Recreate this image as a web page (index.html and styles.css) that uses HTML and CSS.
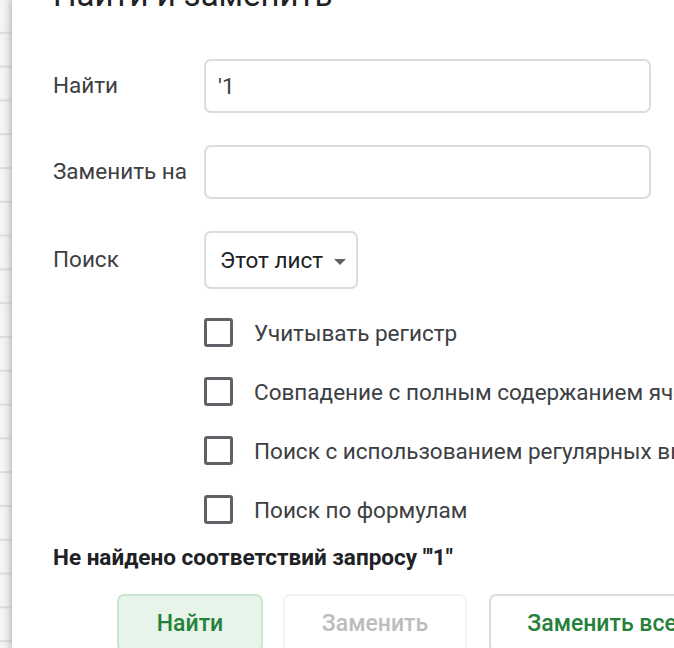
FILE: index.html
```html
<!DOCTYPE html>
<html lang="ru">
<head>
  <meta charset="UTF-8">
  <meta name="viewport" content="width=device-width, initial-scale=1.0">
  <title>Найти и заменить</title>
  <link rel="stylesheet" href="styles.css">
</head>
<body>
  <div class="sheet-edge"></div>
  <div class="dialog">
    <h1 class="title">Найти и заменить</h1>

    <div class="form">
      <label class="label" for="find">Найти</label>
      <input class="field" type="text" id="find" value="'1">

      <label class="label" for="replace">Заменить на</label>
      <input class="field" type="text" id="replace">

      <span class="label">Поиск</span>
      <div class="select">
        <span>Этот лист</span>
        <span class="arrow"></span>
      </div>

      <div class="options">
        <div class="option"><span class="box"></span>Учитывать регистр</div>
        <div class="option"><span class="box"></span>Совпадение с полным содержанием ячейки</div>
        <div class="option"><span class="box"></span>Поиск с использованием регулярных выражений</div>
        <div class="option"><span class="box"></span>Поиск по формулам</div>
      </div>
    </div>

    <p class="message">Не найдено соответствий запросу "'1"</p>

    <div class="buttons">
      <button class="btn btn-find">Найти</button>
      <button class="btn btn-disabled">Заменить</button>
      <button class="btn btn-all">Заменить все</button>
    </div>
  </div>
</body>
</html>
```

FILE: styles.css
```css
body {
  margin: 0;
  height: 648px;
  overflow: hidden;
  display: flex;
  font-family: 'Roboto', 'Liberation Sans', sans-serif;
  background-color: #ffffff;
}
.sheet-edge {
  width: 12px;
  flex-shrink: 0;
  background-image:
    repeating-linear-gradient(to bottom, transparent 0 32px, #dcdcdc 32px 34px),
    linear-gradient(to right, #f6f6f6, #e9e9e9);
  background-size: 100% 33.8px, 100% 100%;
}
.dialog {
  flex: 1;
  min-width: 0;
  padding-left: 41px;
  background-color: #ffffff;
  box-shadow: -2px 0 6px rgba(0, 0, 0, 0.18);
  white-space: nowrap;
  overflow: hidden;
}
.title {
  margin: -25px 0 0;
  font-size: 33px;
  line-height: 40px;
  font-weight: 400;
  color: #202124;
}
.form {
  display: grid;
  grid-template-columns: 151px 447px;
  row-gap: 32px;
  align-items: center;
  margin-top: 44px;
}
.label {
  margin-bottom: 3px;
  font-size: 22.5px;
  color: #3c4043;
}
.field {
  box-sizing: border-box;
  width: 447px;
  height: 54px;
  margin: 0;
  padding: 0 12px;
  border: 2px solid #dadce0;
  border-radius: 7px;
  font-family: inherit;
  font-size: 22.5px;
  color: #3c4043;
  outline: none;
}
.select {
  box-sizing: border-box;
  width: 154px;
  height: 58px;
  padding: 0 14px;
  display: flex;
  align-items: center;
  border: 2px solid #dadce0;
  border-radius: 7px;
  font-size: 22.5px;
  color: #202124;
}
.arrow {
  margin-left: 11px;
  border-left: 6px solid transparent;
  border-right: 6px solid transparent;
  border-top: 6px solid #5f6368;
  margin-top: 3px;
}
.options {
  grid-column: 2;
  display: flex;
  flex-direction: column;
  gap: 30px;
  margin-top: -3px;
}
.option {
  display: flex;
  align-items: center;
  height: 29px;
  font-size: 22.5px;
  color: #3c4043;
}
.box {
  box-sizing: border-box;
  width: 29px;
  height: 29px;
  margin-right: 21px;
  border: 3px solid #5f6368;
  border-radius: 3px;
  flex-shrink: 0;
}
.message {
  margin: 20px 0 0;
  font-size: 22.5px;
  line-height: 26px;
  font-weight: 700;
  color: #202124;
}
.buttons {
  display: flex;
  margin-top: 24px;
  margin-left: 64px;
}
.btn {
  height: 58px;
  padding: 0;
  border: 2px solid #dadce0;
  border-radius: 7px;
  background-color: #ffffff;
  font-family: inherit;
  font-size: 23px;
  font-weight: 500;
  color: #258039;
  flex-shrink: 0;
}
.btn-find {
  width: 146px;
  background-color: #e6f4ea;
  border-color: #c8e6cf;
}
.btn-disabled {
  width: 184px;
  margin-left: 20px;
  border-color: #f1f3f4;
  color: #bdbdbd;
}
.btn-all {
  width: 226px;
  margin-left: 22px;
}
```
